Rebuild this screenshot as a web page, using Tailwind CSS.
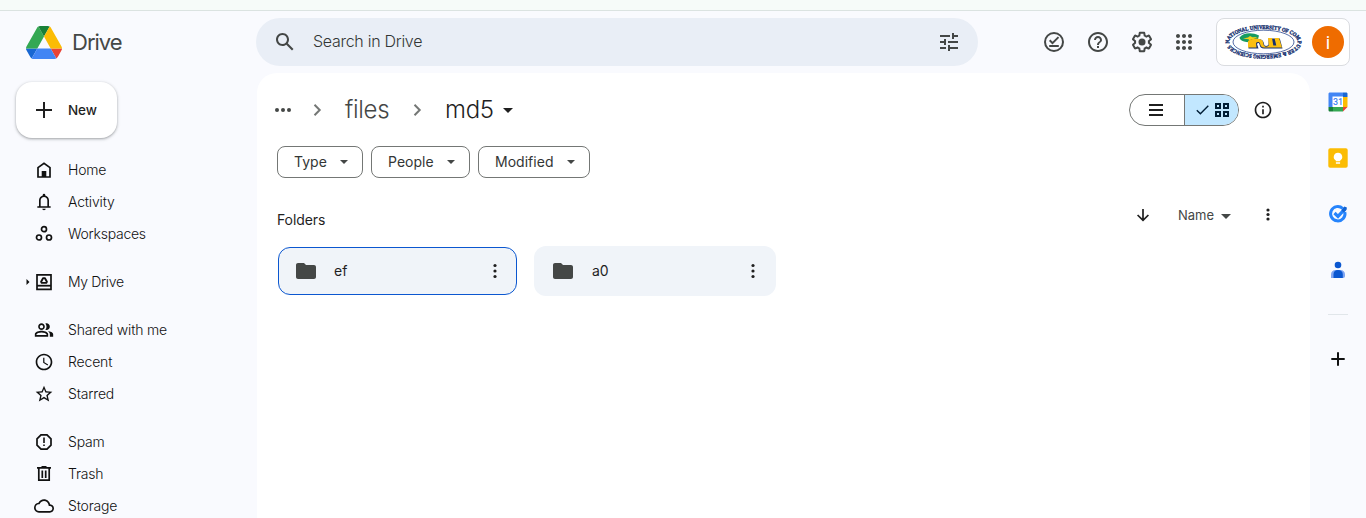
<!DOCTYPE html>
<html lang="en">
<head>
<meta charset="utf-8">
<title>md5 - Google Drive</title>
<script src="https://cdn.jsdelivr.net/npm/@tailwindcss/browser@4"></script>
</head>
<body class="flex h-[518px] w-[1366px] flex-col overflow-hidden bg-[#f9fafe] font-['Inter','Liberation_Sans',sans-serif] text-sm text-[#1f1f1f]">
<div class="h-[11px] shrink-0 border-b border-[#dbe3e1] bg-[#f6fbf9]"></div>

<header class="flex h-[62px] shrink-0 items-center pl-[26px] pr-4">
  <a class="flex w-[230px] items-center gap-[10px]">
    <svg class="h-[33px] w-9" viewBox="0 0 87.3 78" preserveAspectRatio="none">
      <path d="m6.6 66.85 3.85 6.65c.8 1.4 1.95 2.5 3.3 3.3l13.75-23.8h-27.5c0 1.55.4 3.1 1.2 4.5z" fill="#1967d2"/>
      <path d="m43.65 25-13.75-23.8c-1.35.8-2.5 1.9-3.3 3.3l-25.4 44a9.06 9.06 0 0 0 -1.2 4.5h27.5z" fill="#34a853"/>
      <path d="m73.55 76.8c1.35-.8 2.5-1.9 3.3-3.3l1.6-2.75 7.65-13.25c.8-1.4 1.2-2.95 1.2-4.5h-27.5z" fill="#ea4335"/>
      <path d="m43.65 25 13.75-23.8c-1.35-.8-2.9-1.2-4.5-1.2h-18.5c-1.6 0-3.15.45-4.5 1.2z" fill="#188038"/>
      <path d="m59.8 53h-32.3l-13.75 23.8c1.35.8 2.9 1.2 4.5 1.2h50.8c1.6 0 3.15-.45 4.5-1.2z" fill="#4285f4"/>
      <path d="m73.4 26.5-12.7-22c-.8-1.4-1.95-2.5-3.3-3.3l-13.75 23.8 16.15 28h27.45c0-1.55-.4-3.1-1.2-4.5z" fill="#fbbc04"/>
    </svg>
    <span class="text-[22px] font-normal leading-7 tracking-[-1px] text-[#444746]">Drive</span>
  </a>
  <div class="flex h-12 w-[722px] items-center rounded-full bg-[#e9eef6] pl-[17px] pr-[17px] text-[#444746]">
    <svg class="size-6" viewBox="0 0 24 24" fill="currentColor"><path d="M20.49 19l-5.73-5.73C15.53 12.2 16 10.91 16 9.5 16 5.91 13.09 3 9.5 3S3 5.91 3 9.5 5.91 16 9.5 16c1.41 0 2.7-.47 3.77-1.24L19 20.49 20.49 19zM5 9.5C5 7.01 7.01 5 9.5 5S14 7.01 14 9.5 11.99 14 9.5 14 5 11.99 5 9.5z"/></svg>
    <span class="ml-4 grow pb-[2px] text-base font-light tracking-[-0.28px] text-[#333635]">Search in Drive</span>
    <svg class="size-6" viewBox="0 0 24 24" fill="currentColor"><path d="M3 17v2h6v-2H3zM3 5v2h10V5H3zm10 16v-2h8v-2h-8v-2h-2v6h2zM7 9v2H3v2h4v2h2V9H7zm14 4v-2H11v2h10zm-6-4h2V7h4V5h-4V3h-2v6z"/></svg>
  </div>
  <div class="ml-16 flex items-center text-[#444746]">
    <svg class="size-6" viewBox="0 0 24 24" fill="none" stroke="currentColor" stroke-width="2"><circle cx="12" cy="12" r="9"/><path d="M7.2 16h9.600M7.700 10.300l2.800 2.800 6-6" stroke-width="2"/></svg>
    <svg class="ml-5 size-6" viewBox="0 0 24 24" fill="currentColor"><path d="M11 18h2v-2h-2v2zm1-16C6.48 2 2 6.48 2 12s4.48 10 10 10 10-4.48 10-10S17.52 2 12 2zm0 18c-4.41 0-8-3.59-8-8s3.59-8 8-8 8 3.59 8 8-3.59 8-8 8zm0-14c-2.21 0-4 1.79-4 4h2c0-1.1.9-2 2-2s2 .9 2 2c0 2-3 1.75-3 5h2c0-2.25 3-2.5 3-5 0-2.21-1.79-4-4-4z"/></svg>
    <svg class="ml-5 size-6" viewBox="0 0 24 24" fill="currentColor"><path d="M13.85 22.25h-3.7c-.74 0-1.36-.54-1.45-1.27l-.27-1.89c-.27-.14-.53-.29-.79-.46l-1.8.72c-.7.26-1.47-.03-1.81-.65L2.2 15.53c-.35-.66-.2-1.44.36-1.88l1.53-1.19c-.01-.15-.02-.3-.02-.46 0-.15.01-.31.02-.46l-1.52-1.19c-.59-.45-.74-1.26-.37-1.88l1.85-3.19c.34-.62 1.11-.9 1.79-.63l1.81.73c.26-.17.52-.32.78-.46l.27-1.91c.09-.7.71-1.25 1.44-1.25h3.7c.74 0 1.36.54 1.45 1.27l.27 1.89c.27.14.53.29.79.46l1.8-.72c.71-.26 1.48.03 1.82.65l1.84 3.18c.36.66.2 1.44-.36 1.88l-1.52 1.19c.01.15.02.3.02.46s-.01.31-.02.46l1.52 1.19c.56.45.72 1.23.37 1.86l-1.86 3.22c-.34.62-1.11.9-1.8.63l-1.8-.72c-.26.17-.52.32-.78.46l-.27 1.91c-.1.68-.72 1.22-1.46 1.22zm-3.23-2h2.76l.37-2.55.53-.22c.44-.18.88-.44 1.34-.78l.45-.34 2.38.96 1.38-2.4-2.03-1.58.07-.56c.03-.26.06-.51.06-.78s-.03-.53-.06-.78l-.07-.56 2.03-1.58-1.39-2.4-2.39.96-.45-.35c-.42-.32-.87-.58-1.33-.77l-.52-.22-.37-2.55h-2.76l-.37 2.55-.53.21c-.44.19-.88.44-1.34.79l-.45.33-2.38-.95-1.39 2.39 2.03 1.58-.07.56a7 7 0 0 0-.06.79c0 .26.02.53.06.78l.07.56-2.03 1.58 1.38 2.4 2.39-.96.45.35c.43.33.86.58 1.33.77l.53.22.38 2.55z"/><circle cx="12" cy="12" r="3.5"/></svg>
    <svg class="ml-[18px] size-6" viewBox="0 0 24 24" fill="currentColor"><path d="M6 8c1.1 0 2-.9 2-2s-.9-2-2-2-2 .9-2 2 .9 2 2 2zm6 12c1.1 0 2-.9 2-2s-.9-2-2-2-2 .9-2 2 .9 2 2 2zm-6 0c1.1 0 2-.9 2-2s-.9-2-2-2-2 .9-2 2 .9 2 2 2zm0-6c1.1 0 2-.9 2-2s-.9-2-2-2-2 .9-2 2 .9 2 2 2zm6 0c1.1 0 2-.9 2-2s-.9-2-2-2-2 .9-2 2 .9 2 2 2zm4-8c0 1.1.9 2 2 2s2-.9 2-2-.9-2-2-2-2 .9-2 2zm-4 2c1.1 0 2-.9 2-2s-.9-2-2-2-2 .9-2 2 .9 2 2 2zm6 6c1.1 0 2-.9 2-2s-.9-2-2-2-2 .9-2 2 .9 2 2 2zm0 6c1.1 0 2-.9 2-2s-.9-2-2-2-2 .9-2 2 .9 2 2 2z"/></svg>
  </div>
  <div class="ml-auto flex h-12 w-[134px] items-center justify-between rounded-lg border border-[#dadce0] bg-white pl-[7px] pr-[5px]">
    <svg class="h-9 w-[79px]" viewBox="0 0 79 36">
      <defs>
        <path id="ring" d="M5.500 19.500 A34.200 13 0 0 1 39.500 5 A34.200 13 0 0 1 73.700 18 A34.200 13 0 0 1 39.500 31 A34.200 13 0 0 1 5.500 19.500"/>
      </defs>
      <text fill="#16306f" stroke="#16306f" stroke-width=".4" font-family="Liberation Serif, serif" font-weight="700" font-size="5.600"><textPath href="#ring" textLength="154" lengthAdjust="spacingAndGlyphs">NATIONAL UNIVERSITY OF COMPUTER &amp; EMERGING SCIENCES</textPath></text>
      <ellipse cx="39.500" cy="18" rx="30.500" ry="11.800" fill="#fff" stroke="#2a478f" stroke-width=".8"/>
      <path d="M15.500 13.500C19 8.500 28 8 35 11.500l-1 3.500c-3 3-9 4-14 2.500-3-1-4.500-2.500-4.500-4z" fill="#169b62"/>
      <path d="M19 14.500l5-1 2-1.600 2.500 1.400 5-.3-4 2-4 1.400-1-1.200z" fill="#f3d11c"/>
      <path d="M24.500 24.500V17c4-3 13.500-3.500 15 1l.8 3c.6 1.300 3.500 1.300 4.200-.5V14.500h11.300l2.700 10H40c-2.800 0-4-1.500-4.500-4-.5-2-2-1.800-2.500-.5l1.500 4.500z" fill="#16306f"/>
      <path d="M24 23.500V17c3.500-3 12.800-3.500 14.800.3l.9 3.600c.8 2.400 4.800 2.200 5.100.1L44 14h4l1.300 7.500h3L50.500 14H55l3 9.500H40c-2.500 0-3.500-1.600-4-4-.6-2.200-3-1.900-4-.5l.5 4.500z" fill="#fbbf10"/>
    </svg>
    <div class="flex size-8 items-center justify-center rounded-full bg-[#ef6c00] pt-[2px] font-['Roboto',sans-serif] text-lg text-white">i</div>
  </div>
</header>

<div class="flex min-h-0 grow">
  <aside class="flex w-[257px] shrink-0 flex-col pl-4">
    <button class="mt-[9px] flex h-14 w-[101px] shrink-0 items-center gap-3 rounded-2xl bg-white pl-4 shadow-[0_1px_2px_rgba(60,64,67,.3),0_1px_3px_1px_rgba(60,64,67,.15)]">
      <svg class="size-6" viewBox="0 0 24 24" fill="currentColor"><path d="M20 13h-7v7h-2v-7H4v-2h7V4h2v7h7v2z"/></svg>
      <span class="pt-px text-[13.500px] font-medium tracking-[-0.1px]">New</span>
    </button>
    <nav class="mt-4 flex flex-col gap-4 pl-[5px] font-light tracking-[-0.17px] text-[#111]">
      <div>
        <a class="flex h-8 items-center"><i class="w-[13px]"></i><svg class="mr-3.5 size-5" viewBox="0 0 20 20"><path d="M4 17V7.600l6-4.300 6 4.300V17z" fill="none" stroke="currentColor" stroke-width="1.700"/><path d="M7.700 11h4.600v6H7.700z" fill="currentColor"/></svg>Home</a>
        <a class="flex h-8 items-center"><i class="w-[13px]"></i><svg class="mr-3.5 size-5" viewBox="0 0 24 24" fill="currentColor"><path d="M4 19v-2h2v-7q0-2.075 1.250-3.687T10.500 4.200v-.7q0-.625.438-1.062T12 2t1.063.438T13.500 3.500v.7q2 .5 3.250 2.113T18 10v7h2v2zm8 3q-.825 0-1.412-.587T10 20h4q0 .825-.587 1.413T12 22m-4-5h8v-7q0-1.650-1.175-2.825T12 6T9.175 7.175T8 10z"/></svg>Activity</a>
        <a class="flex h-8 items-center tracking-[-0.25px]"><i class="w-[13px]"></i><svg class="mr-3.5 size-5" viewBox="0 0 20 20" fill="none" stroke="currentColor" stroke-width="1.700"><circle cx="10" cy="5.200" r="2.500"/><circle cx="5" cy="13.500" r="2.500"/><circle cx="15" cy="13.500" r="2.500"/></svg>Workspaces</a>
      </div>
      <a class="flex h-8 items-center tracking-[-0.35px]"><svg class="ml-[4px] mr-[4px] h-5 w-[5px]" viewBox="0 0 5 20"><path d="M1.500 7l3 3-3 3z" fill="currentColor"/></svg><svg class="mr-3.5 size-5" viewBox="0 0 20 20"><path d="M3 2.800h14v14.500H3z" fill="none" stroke="currentColor" stroke-width="1.700"/><path d="M3 12.800h14v1.800H3z" fill="currentColor"/><path d="M9.200 6.100h1.600l2.100 3.600-.7 1.200H7.800l-.7-1.200z" fill="none" stroke="currentColor" stroke-width="1.900" stroke-linejoin="round"/></svg>My Drive</a>
      <div>
        <a class="flex h-8 items-center"><i class="w-[13px]"></i><svg class="mr-3.5 size-5" viewBox="0 0 24 24" fill="currentColor"><path d="M16.670 13.130C18.040 14.060 19 15.320 19 17v3h4v-3c0-2.180-3.570-3.470-6.330-3.870zM15 12c2.210 0 4-1.790 4-4s-1.790-4-4-4c-.47 0-.91.1-1.330.24C14.500 5.270 15 6.580 15 8s-.5 2.730-1.330 3.760c.42.14.86.24 1.330.24zM9 12c2.210 0 4-1.790 4-4s-1.790-4-4-4-4 1.790-4 4 1.790 4 4 4zm0-6c1.100 0 2 .9 2 2s-.9 2-2 2-2-.9-2-2 .9-2 2-2zM9 13c-2.670 0-8 1.340-8 4v3h16v-3c0-2.660-5.330-4-8-4zm6 5H3v-.99C3.200 16.290 6.300 15 9 15s5.800 1.290 6 2v1z"/></svg>Shared with me</a>
        <a class="flex h-8 items-center"><i class="w-[13px]"></i><svg class="mr-3.5 size-5" viewBox="0 0 24 24" fill="currentColor"><path d="M11.990 2C6.470 2 2 6.480 2 12s4.470 10 9.990 10C17.520 22 22 17.520 22 12S17.520 2 11.990 2zM12 20c-4.420 0-8-3.580-8-8s3.580-8 8-8 8 3.580 8 8-3.580 8-8 8zm.5-13H11v6l5.250 3.150.75-1.230-4.500-2.670z"/></svg>Recent</a>
        <a class="flex h-8 items-center"><i class="w-[13px]"></i><svg class="mr-3.5 size-5" viewBox="0 0 24 24" fill="currentColor"><path d="M22 9.240l-7.190-.62L12 2 9.190 8.630 2 9.240l5.460 4.730L5.820 21 12 17.270 18.180 21l-1.630-7.030L22 9.240zM12 15.400l-3.760 2.270 1-4.280-3.320-2.880 4.380-.38L12 6.100l1.710 4.040 4.380.38-3.320 2.880 1 4.280L12 15.400z"/></svg>Starred</a>
      </div>
      <div>
        <a class="flex h-8 items-center"><i class="w-[13px]"></i><svg class="mr-3.5 size-5" viewBox="0 0 20 20"><path d="M7 2.900h6L17 6.900v6.200L13 17.100H7L3 13.100V6.900z" fill="none" stroke="currentColor" stroke-width="1.700"/><path d="M9.200 5.500h1.600v5.500H9.200zM9.200 12.400h1.600V14H9.200z" fill="currentColor"/></svg>Spam</a>
        <a class="flex h-8 items-center"><i class="w-[13px]"></i><svg class="mr-3.5 size-5" viewBox="0 0 20 20" fill="none" stroke="currentColor" stroke-width="1.700"><path d="M3 3.800h14M7.500 2.900h5M4.800 4v12.200h10.400V4M8.300 6.500v7.500M11.700 6.500v7.500"/></svg>Trash</a>
        <a class="flex h-8 items-center"><i class="w-[13px]"></i><svg class="mr-3.5 size-5" viewBox="0 0 24 24" fill="currentColor"><path d="M19.350 10.040C18.670 6.590 15.640 4 12 4 9.110 4 6.600 5.640 5.350 8.040 2.340 8.360 0 10.910 0 14c0 3.310 2.690 6 6 6h13c2.760 0 5-2.240 5-5 0-2.640-2.050-4.780-4.650-4.960zM19 18H6c-2.210 0-4-1.790-4-4 0-2.050 1.530-3.760 3.560-3.970l1.070-.11.5-.95C8.080 7.140 9.940 6 12 6c2.620 0 4.880 1.860 5.390 4.430l.3 1.500 1.530.11c1.560.1 2.780 1.410 2.780 2.960 0 1.650-1.350 3-3 3z"/></svg>Storage</a>
      </div>
    </nav>
  </aside>

  <main class="w-[1053px] shrink-0 rounded-t-[20px] bg-white pl-5">
    <div class="flex h-[73px] items-center justify-between pr-[37px]">
      <div class="flex items-center text-[24px] font-light leading-8 tracking-[-0.3px]">
        <svg class="-ml-1 h-5 w-5" viewBox="0 0 20 20" fill="#444746"><circle cx="4" cy="10" r="2"/><circle cx="10" cy="10" r="2"/><circle cx="16" cy="10" r="2"/></svg>
        <svg class="ml-[14px] size-5" viewBox="0 0 20 20" fill="none" stroke="#747775" stroke-width="2"><path d="M7.500 4.800l5.200 5.200-5.200 5.200"/></svg>
        <span class="ml-[18px] w-[45px] pt-px text-[#444746]">files</span>
        <svg class="ml-[17px] size-5" viewBox="0 0 20 20" fill="none" stroke="#747775" stroke-width="2"><path d="M7.500 4.800l5.200 5.200-5.200 5.200"/></svg>
        <span class="ml-[18px] w-[48px] pt-px">md5</span>
        <svg class="ml-[10px] h-5 w-[10px]" viewBox="0 0 10 20"><path d="M0 8h10l-5 5z" fill="currentColor"/></svg>
      </div>
      <div class="flex items-center">
        <div class="flex h-8 w-[110px] overflow-hidden rounded-full border border-[#747775]">
          <div class="flex w-[55px] items-center justify-center border-r border-[#747775] pr-[2px]"><svg class="h-3 w-[14px]" viewBox="0 0 14 12" fill="currentColor"><path d="M0 0h14v2H0zM0 5h14v2H0zM0 10h14v2H0z"/></svg></div>
          <div class="flex grow items-center justify-center gap-[6px] bg-[#c2e7ff] pl-px text-[#001d35]">
            <svg class="h-[10px] w-[13px]" viewBox="0 0 13 10" fill="none" stroke="currentColor" stroke-width="1.400"><path d="M.8 5.200l3.600 3.500L12.300.8"/></svg>
            <svg class="size-[14px]" viewBox="0 0 14 14" fill="none" stroke="currentColor" stroke-width="2"><path d="M1 1h4v4H1zM9 1h4v4H9zM1 9h4v4H1zM9 9h4v4H9z"/></svg>
          </div>
        </div>
        <svg class="ml-[14px] size-5" viewBox="0 0 24 24" fill="currentColor"><path d="M11 7h2v2h-2V7zm0 4h2v6h-2v-6zm1-9C6.480 2 2 6.480 2 12s4.480 10 10 10 10-4.480 10-10S17.520 2 12 2zm0 18c-4.410 0-8-3.590-8-8s3.590-8 8-8 8 3.590 8 8-3.590 8-8 8z"/></svg>
      </div>
    </div>
    <div class="flex gap-2 font-normal tracking-[0.02px] text-[#333635]">
      <div class="flex h-8 w-[86px] items-center justify-between rounded-lg border border-[#747775] pl-4 pr-[14px]">Type<svg class="h-1 w-2" viewBox="0 0 8 4"><path d="M0 0h8L4 4z" fill="#444746"/></svg></div>
      <div class="flex h-8 w-[99px] items-center justify-between rounded-lg border border-[#747775] pl-4 pr-[14px]">People<svg class="h-1 w-2" viewBox="0 0 8 4"><path d="M0 0h8L4 4z" fill="#444746"/></svg></div>
      <div class="flex h-8 w-[112px] items-center justify-between rounded-lg border border-[#747775] pl-4 pr-[14px]">Modified<svg class="h-1 w-2" viewBox="0 0 8 4"><path d="M0 0h8L4 4z" fill="#444746"/></svg></div>
    </div>
    <div class="flex h-[68px] items-center pt-4">
      <span class="font-normal tracking-[-0.1px]">Folders</span>
      <div class="mb-[10px] ml-auto mr-[32px] flex items-center text-[#444746]">
        <svg class="size-5" viewBox="0 0 20 20" fill="none" stroke="#1f1f1f" stroke-width="1.700"><path d="M10 4v11M4.600 10l5.400 5.400 5.400-5.400"/></svg>
        <span class="ml-[25px] w-9 pt-px text-[13px] font-normal">Name</span>
        <svg class="ml-[7px] mt-[3px] h-[5px] w-[10px]" viewBox="0 0 10 5"><path d="M0 0h10L5 5z" fill="currentColor"/></svg>
        <svg class="ml-[27px] size-5" viewBox="0 0 20 20" fill="#1f1f1f"><circle cx="10" cy="5" r="1.600"/><circle cx="10" cy="9.500" r="1.600"/><circle cx="10" cy="14" r="1.600"/></svg>
      </div>
    </div>
    <div class="flex items-center gap-[17px] pl-px font-normal">
      <div class="flex h-12 w-[239px] items-center rounded-xl border border-[#0b57d0] bg-[#f0f4f9] pl-[17px] pr-[11px]">
        <svg class="h-4 w-5" viewBox="0 0 20 16"><path d="M2 0h6l2 2h8c1.100 0 2 .9 2 2v10c0 1.100-.9 2-2 2H2c-1.100 0-2-.9-2-2V2C0 .9.9 0 2 0z" fill="#444746"/></svg>
        <span class="ml-[18px] grow">ef</span>
        <svg class="size-5" viewBox="0 0 20 20" fill="#1f1f1f"><circle cx="10" cy="4.500" r="1.600"/><circle cx="10" cy="10" r="1.600"/><circle cx="10" cy="15.500" r="1.600"/></svg>
      </div>
      <div class="flex h-[50px] w-[242px] items-center rounded-xl bg-[#f0f4f9] pl-[19px] pr-[13px]">
        <svg class="h-4 w-5" viewBox="0 0 20 16"><path d="M2 0h6l2 2h8c1.100 0 2 .9 2 2v10c0 1.100-.9 2-2 2H2c-1.100 0-2-.9-2-2V2C0 .9.9 0 2 0z" fill="#444746"/></svg>
        <span class="ml-[19px] grow">a0</span>
        <svg class="size-5" viewBox="0 0 20 20" fill="#1f1f1f"><circle cx="10" cy="4.500" r="1.600"/><circle cx="10" cy="10" r="1.600"/><circle cx="10" cy="15.500" r="1.600"/></svg>
      </div>
    </div>
  </main>

  <aside class="flex grow flex-col items-center pt-[19px]">
    <svg class="size-5" viewBox="0 0 20 20"><path d="M2 .5h13V5H5v10H.5V2C.5 1 1 .5 2 .5z" fill="#4285f4"/><path d="M15 .5h3c1 0 1.500.5 1.500 1.500v3H15z" fill="#1967d2"/><path d="M15 5h4.500v10H15z" fill="#fbbc04"/><path d="M5 15h10v4.500H5z" fill="#34a853"/><path d="M.5 15H5v4.500H2c-1 0-1.500-.5-1.500-1.500z" fill="#188038"/><path d="M15 15h4.500L15 19.500z" fill="#ea4335"/><path d="M4.500 4.500H15V15H4.500z" fill="#fff"/><text x="9.900" y="13.200" text-anchor="middle" font-family="Roboto, sans-serif" font-weight="500" font-size="8.800" fill="#4285f4">31</text></svg>
    <svg class="mt-9 size-5" viewBox="0 0 20 20"><rect x=".3" y=".3" width="19.400" height="19.400" rx="1.800" fill="#fbbc04"/><path d="M10 4.700a4.200 4.200 0 0 0-2.200 7.800v.8h4.400v-.8A4.200 4.200 0 0 0 10 4.700zM7.900 14.200h4.200v1.500H7.900z" fill="#fff"/></svg>
    <svg class="mt-9 size-5" viewBox="0 0 20 20" fill="none"><path d="M14.800 4.500A7.200 7.200 0 1 0 16.800 8" stroke="#2684fc" stroke-width="3"/><path d="M6.500 9l3.500 3.400 7-7.600" stroke="#2684fc" stroke-width="3.200"/><path d="M13.300 6.200l3-3.700 2.600 1.100-.3 2.200-2.800 2.800z" fill="#1263d3"/></svg>
    <svg class="mt-9 size-5" viewBox="0 0 20 20"><circle cx="10" cy="5" r="3.300" fill="#0b57d0"/><path d="M3 18v-3.500C3 11.500 5 10 7.500 10h5c2.500 0 4.500 1.500 4.500 4.500V16c0 1.300-.7 2-2 2z" fill="#7fa5f2"/><path d="M5.500 18v-3.500C5.500 11.500 7 10 10 10s4.800 1.500 4.800 4.500V18z" fill="#0b57d0"/></svg>
    <div class="mt-[34px] h-px w-5 bg-[#e1e6ea]"></div>
    <svg class="mt-[34px] size-5" viewBox="0 0 20 20"><path d="M9 3.300h2V9h5.700v2H11v5.700H9V11H3.300V9H9z" fill="#111"/></svg>
  </aside>
</div>
</body>
</html>
